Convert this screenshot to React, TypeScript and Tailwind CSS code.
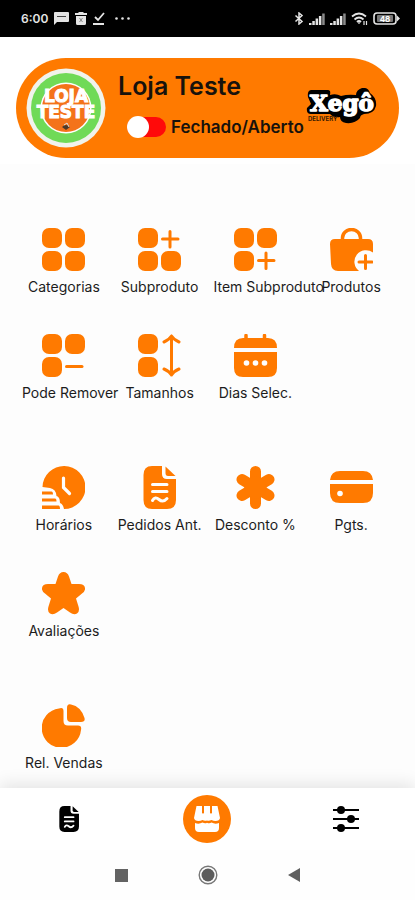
import type { ReactNode } from "react";

type MenuItem = { label: string; icon: ReactNode };

const tile = { width: 20, height: 20, rx: 7 };

const sections: MenuItem[][] = [
  [
    { label: "Categorias", icon: <TilesIcon tiles={["tl", "tr", "bl", "br"]} /> },
    {
      label: "Subproduto",
      icon: (
        <TilesIcon tiles={["tl", "bl", "br"]}>
          <path d="M32 3.500V19M24.500 11H40" />
        </TilesIcon>
      )
    },
    {
      label: "Item Subproduto",
      icon: (
        <TilesIcon tiles={["tl", "tr", "bl"]}>
          <path d="M32 25V40.500M24.500 32.500H40" />
        </TilesIcon>
      )
    },
    { label: "Produtos", icon: <BagIcon /> },
    {
      label: "Pode Remover",
      icon: (
        <TilesIcon tiles={["tl", "tr", "bl"]}>
          <path d="M24.500 32.500H40" />
        </TilesIcon>
      )
    },
    {
      label: "Tamanhos",
      icon: (
        <TilesIcon tiles={["tl", "bl"]}>
          <path d="M33.500 2V41M26 8Q31 6 33.500 2Q36 6 41 8M26 35Q31 37 33.500 41Q36 37 41 35" />
        </TilesIcon>
      )
    },
    { label: "Dias Selec.", icon: <CalendarIcon /> }
  ],
  [
    { label: "Horários", icon: <HoursIcon /> },
    { label: "Pedidos Ant.", icon: <NoteIcon className="h-[43px] w-[43px] text-[#ff7a00]" /> },
    { label: "Desconto %", icon: <AsteriskIcon /> },
    { label: "Pgts.", icon: <CardIcon /> },
    { label: "Avaliações", icon: <StarIcon /> }
  ],
  [{ label: "Rel. Vendas", icon: <PieIcon /> }]
];

export default function App() {
  return (
    <div className="flex min-h-screen flex-col bg-[#fdfdfd] font-['Inter',sans-serif] text-[#1c1c1c]">
      <StatusBar />
      <StoreHeader />

      <main className="flex grow flex-col gap-[63px] px-4 pt-16 pb-3">
        {sections.map((items) => (
          <section key={items[0].label} className="grid grid-cols-4 gap-y-[37px]">
            {items.map((item) => (
              <MenuButton key={item.label} {...item} />
            ))}
          </section>
        ))}
      </main>

      <TabBar />
      <SystemNav />
    </div>
  );
}

function MenuButton({ label, icon }: MenuItem) {
  return (
    <button type="button" className="flex flex-col px-[6px]">
      <span className="flex w-full justify-center">{icon}</span>
      <span className="mt-[6px] w-full text-center text-sm leading-5 whitespace-nowrap">{label}</span>
    </button>
  );
}

function StatusBar() {
  return (
    <div className="flex h-[37px] items-center justify-between bg-black pr-[15px] pl-[21px] text-[#e4e4e4]">
      <div className="flex items-center gap-[6px]">
        <span className="text-xs font-semibold">6:00</span>
        <svg viewBox="0 0 15 13" className="h-[13px] w-[15px]" fill="currentColor" aria-hidden="true">
          <path d="M1 0H14Q15 0 15 1V9Q15 10 14 10H3L0 13V1Q0 0 1 0Z" />
          <path d="M3 4.500H12" stroke="#444" />
        </svg>
        <svg viewBox="0 0 12 13" className="h-[13px] w-3" fill="currentColor" aria-hidden="true">
          <path d="M4 0H8L9 1H12V3H0V1H3ZM1 4H11V11.500Q11 13 9.500 13H2.500Q1 13 1 11.500Z" />
          <path d="M4.500 6L7.500 10M7.500 6L4.500 10" stroke="#888" />
        </svg>
        <svg viewBox="0 0 12 13" className="h-[13px] w-3" fill="none" stroke="currentColor" strokeWidth="1.800" aria-hidden="true">
          <path d="M2 5L5 8L11 1M0 12H11" />
        </svg>
        <svg viewBox="0 0 15 3" className="ml-1 h-[3px] w-[15px]" fill="currentColor" aria-hidden="true">
          <circle cx="1.500" cy="1.500" r="1.300" />
          <circle cx="7.500" cy="1.500" r="1.300" />
          <circle cx="13.500" cy="1.500" r="1.300" />
        </svg>
      </div>
      <div className="flex items-center gap-[5px]">
        <svg viewBox="0 0 10 13" className="h-[13px] w-[10px]" fill="none" stroke="currentColor" strokeWidth="1.500" aria-hidden="true">
          <path d="M1.500 3.500L8 9.500L5 12V1L8 3.500L1.500 9.500" />
        </svg>
        <SignalIcon />
        <SignalIcon />
        <svg viewBox="0 0 17 13" className="h-[13px] w-[17px]" fill="none" stroke="currentColor" strokeWidth="1.800" aria-hidden="true">
          <path d="M1 4.500Q8 -1.500 15 4.500M3.500 7.500Q8 3.500 12.500 7.500M6 10Q8 8 10 10" />
          <path d="M8 12V10M13 9V13M15.500 9V13" strokeWidth="1.200" />
        </svg>
        <svg viewBox="0 0 27 13" className="h-[13px] w-[27px]" aria-hidden="true">
          <rect x="1" y="1" width="22" height="11" rx="3" fill="none" stroke="currentColor" strokeWidth="1.600" />
          <path d="M24 3.500L27 6.500L24 9.500Z" fill="currentColor" />
          <rect x="4" y="3" width="16" height="7" rx="1" fill="#777" />
          <text x="12" y="9.500" textAnchor="middle" fontSize="8" fontWeight="700" fill="#fff">48</text>
        </svg>
      </div>
    </div>
  );
}

function SignalIcon() {
  return (
    <svg viewBox="0 0 16 12" className="h-3 w-4" fill="currentColor" aria-hidden="true">
      <path d="M0 10H2.500V12H0ZM3.300 8H5.800V12H3.300ZM6.600 5.500H9.100V12H6.600ZM9.900 3H12.400V12H9.900Z" />
      <path d="M13.200 0.500H15.700V12H13.200Z" fill="#8a8a8a" />
    </svg>
  );
}

function StoreHeader() {
  return (
    <header className="bg-white px-4 pt-[21px] pb-[6px]">
      <div className="flex h-[100px] items-center rounded-full bg-[#ff7a00] pr-[21px] pl-[10px]">
        <StoreLogo />
        <div className="ml-3 flex grow flex-col gap-[13px] pb-2">
          <h1 className="text-[25px] leading-8 font-semibold text-[#17120c]">Loja Teste</h1>
          <label className="ml-[9px] flex items-center gap-[5px]">
            <input type="checkbox" role="switch" className="peer sr-only" />
            <span className="flex h-5 w-[39px] items-center rounded-full bg-[#ff0a0a]">
              <span className="h-[22px] w-[22px] shrink-0 rounded-full bg-white" />
            </span>
            <span className="text-[17px] leading-6 font-semibold text-[#17120c]">Fechado/Aberto</span>
          </label>
        </div>
        <XegoLogo />
      </div>
    </header>
  );
}

function StoreLogo() {
  return (
    <svg viewBox="0 0 80 80" className="h-20 w-20 shrink-0" role="img" aria-label="Loja Teste">
      <circle cx="40" cy="40" r="39.500" fill="#f1f3ec" />
      <circle cx="40" cy="40" r="35" fill="#70da57" />
      <circle cx="40" cy="40" r="25.500" fill="#fff" />
      <circle cx="40" cy="40" r="24" fill="#f4731a" />
      <g
        fill="#fff"
        stroke="#fff"
        strokeWidth="1"
        textAnchor="middle"
        fontSize="17"
        fontWeight="700"
        className="font-['DejaVu_Sans',sans-serif]"
      >
        <text x="40" y="34">LOJA</text>
        <text x="40" y="50">TESTE</text>
      </g>
      <path d="M36 59Q40 55 44 59L40 62Z" fill="#4b3a2c" />
      <path d="M38 57L41 55L43 59" fill="none" stroke="#ddd" />
    </svg>
  );
}

function XegoLogo() {
  return (
    <svg viewBox="0 0 72 40" className="-ml-10 h-10 w-[72px] shrink-0" role="img" aria-label="Xegô Delivery">
      <path
        d="M5 2H22Q25 2 24 7Q30 5 35 8Q42 6 50 7Q50 2 56 0Q62 -1 64 5Q71 10 70 18Q68 26 58 26Q54 27 54 30Q49 36 40 35Q34 34 34 29Q28 30 24 26H5Q0 26 1 20L5 16L2 9Q1 3 5 2Z"
        fill="#000"
      />
      <text
        x="4"
        y="23"
        fontSize="23"
        fontWeight="700"
        fill="#fff"
        stroke="#fff"
        strokeWidth="1.500"
        strokeLinejoin="round"
        className="font-['DejaVu_Serif',serif]"
      >
        Xegô
      </text>
      <text x="2" y="33" fontSize="6" fontWeight="700" fill="#3a1a00">DELIVERY</text>
    </svg>
  );
}

function TabBar() {
  return (
    <nav className="grid h-[62px] grid-cols-3 items-center bg-white shadow-[0_-4px_16px_rgba(0,0,0,0.1)]">
      <button type="button" aria-label="Pedidos" className="flex justify-center">
        <NoteIcon className="h-[26px] w-[26px] text-black" />
      </button>
      <button type="button" aria-label="Loja" className="flex justify-center">
        <span className="flex h-12 w-12 items-center justify-center rounded-full bg-[#ff7a00]">
          <svg viewBox="0 0 26 26" className="h-[26px] w-[26px]" fill="#fff" aria-hidden="true">
            <path d="M2.500 0H8V7Q9 8 10 7V0H16V7Q17 8 18 7V0H23.500L26 12Q25.500 15 21.500 15Q19.500 15 17.500 14Q15 15.300 13 14.500Q10.500 15.300 8.500 14Q6.500 15 4.500 15Q0.500 15 0 12Z" />
            <path d="M1 17Q5 18.500 8.500 16.500Q11 18 13 16.800Q15.500 18 17.500 16.500Q21 18.500 25 17V22Q25 26 21 26H5Q1 26 1 22Z" />
          </svg>
        </span>
      </button>
      <button type="button" aria-label="Ajustes" className="flex justify-center">
        <svg viewBox="0 0 26 26" className="h-[26px] w-[26px]" aria-hidden="true">
          <path d="M0 4H26M0 13H26M0 22H26" stroke="#000" strokeWidth="2" />
          <circle cx="8" cy="4" r="4" />
          <circle cx="18" cy="13" r="4" />
          <circle cx="8" cy="22" r="4" />
        </svg>
      </button>
    </nav>
  );
}

function SystemNav() {
  return (
    <nav className="flex h-[50px] items-center justify-center gap-[70px] bg-[#fefefe]">
      <button type="button" aria-label="Recentes" className="flex w-4 justify-center">
        <span className="h-[13px] w-[13px] bg-[#636363]" />
      </button>
      <button type="button" aria-label="Início" className="flex w-4 justify-center">
        <svg viewBox="0 0 20 20" className="h-5 w-5 shrink-0" aria-hidden="true">
          <circle cx="10" cy="10" r="8.800" fill="none" stroke="#777" strokeWidth="1.400" />
          <circle cx="10" cy="10" r="6.500" fill="#5c5c5c" />
        </svg>
      </button>
      <button type="button" aria-label="Voltar" className="flex w-4 justify-center">
        <svg viewBox="0 0 12 14" className="h-[14px] w-3" aria-hidden="true">
          <path d="M0 7L12 0V14Z" fill="#5f5f5f" />
        </svg>
      </button>
    </nav>
  );
}

function MenuIcon({ children }: { children: ReactNode }) {
  return (
    <svg viewBox="0 0 43 43" className="h-[43px] w-[43px] text-[#ff7a00]" fill="currentColor" aria-hidden="true">
      {children}
    </svg>
  );
}

function TilesIcon({ tiles, children }: { tiles: ("tl" | "tr" | "bl" | "br")[]; children?: ReactNode }) {
  return (
    <MenuIcon>
      {tiles.map((pos) => (
        <rect key={pos} x={pos.endsWith("l") ? 0 : 23} y={pos.startsWith("t") ? 0 : 23} {...tile} />
      ))}
      <g fill="none" stroke="currentColor" strokeWidth="3" strokeLinecap="round" strokeLinejoin="round">
        {children}
      </g>
    </MenuIcon>
  );
}

function BagIcon() {
  return (
    <MenuIcon>
      <path d="M12.500 13V10A9 8.500 0 0 1 30.500 10V13" fill="none" stroke="currentColor" strokeWidth="3.500" />
      <path d="M5 11H38Q43 11 43 16V24.500A10.500 10.500 0 0 0 29 43H8Q1.500 43 1 36L0 16Q0 11 5 11Z" />
      <path d="M35.500 27.500V40.500M29 34H42" fill="none" stroke="currentColor" strokeWidth="3" strokeLinecap="round" />
    </MenuIcon>
  );
}

function CalendarIcon() {
  return (
    <MenuIcon>
      <path d="M12 1.500V6M30.500 1.500V6" stroke="currentColor" strokeWidth="3.500" strokeLinecap="round" />
      <path d="M9 4H34Q43 4 43 14H0Q0 4 9 4ZM0 18H43V34Q43 43 34 43H9Q0 43 0 34Z" />
      <g fill="#fdfdfd">
        <circle cx="12.500" cy="29" r="2.800" />
        <circle cx="21.500" cy="29" r="2.800" />
        <circle cx="30.500" cy="29" r="2.800" />
      </g>
    </MenuIcon>
  );
}

function HoursIcon() {
  return (
    <MenuIcon>
      <path d="M0.500 21A21.500 21.500 0 1 1 22 43Q21 38 18 37Q18 31 14.500 30Q14 23 8 22Z" />
      <path d="M21.500 12V21.500L27.500 27.500" fill="none" stroke="#fdfdfd" strokeWidth="3.200" strokeLinecap="round" />
      <path d="M0 25.500H9.500Q11 25.500 11 28.500H0ZM0 32.500H13Q14.500 32.500 14.500 35.500H0ZM0 39.500H16.500Q18 39.500 18 43H0Z" />
    </MenuIcon>
  );
}

function NoteIcon({ className }: { className: string }) {
  return (
    <svg viewBox="0 0 43 43" className={className} fill="currentColor" aria-hidden="true">
      <path d="M14 0H24V8Q24 13 29 13H38V34Q38 43 29 43H14Q5.500 43 5.500 34V9Q5.500 0 14 0Z" />
      <path d="M27.500 0.500L37.500 10H30Q27.500 10 27.500 7Z" />
      <path
        d="M14.500 18.500H29M14.500 25.500H29M14.500 34.500Q17 30 21 33.500Q25 37 29 32.500"
        fill="none"
        stroke="#fdfdfd"
        strokeWidth="3"
        strokeLinecap="round"
      />
    </svg>
  );
}

function AsteriskIcon() {
  return (
    <MenuIcon>
      <path
        d="M21.500 5.500V37.500M8 13.500L35 29.500M8 29.500L35 13.500"
        stroke="currentColor"
        strokeWidth="11"
        strokeLinecap="round"
      />
      <circle cx="21.500" cy="21.500" r="11" />
    </MenuIcon>
  );
}

function CardIcon() {
  return (
    <MenuIcon>
      <path d="M10 5H33Q42 5 43 14H0Q1 5 10 5ZM0 18H43V27Q43 37 33 37H10Q0 37 0 27Z" />
      <circle cx="10" cy="27.500" r="2.800" fill="#fdfdfd" />
    </MenuIcon>
  );
}

function StarIcon() {
  return (
    <MenuIcon>
      <path d="M21.500 0Q25.500 0 27 4.500L29.500 12H37Q42.500 12 43 16Q43.500 19 40 21.500L34 26.500L36.500 34.500Q38 39.500 35 41.500Q32 43.500 28 40.500L21.500 36L15 40.500Q11 43.500 8 41.500Q5 39.500 6.500 34.500L9 26.500L3 21.500Q-0.500 19 0 16Q0.500 12 6 12H13.500L16 4.500Q17.500 0 21.500 0Z" />
    </MenuIcon>
  );
}

function PieIcon() {
  return (
    <MenuIcon>
      <path d="M17 4.500Q21.500 3 21.500 7V17Q21.500 21.500 26 21.500H36Q40 21.500 39 26A19.700 19.700 0 1 1 17 4.500Z" />
      <path d="M29 0.500Q39 2.500 42.500 14Q43.500 18 39 18H29Q25 18 25 14V4Q25 -0.500 29 0.500Z" />
    </MenuIcon>
  );
}
